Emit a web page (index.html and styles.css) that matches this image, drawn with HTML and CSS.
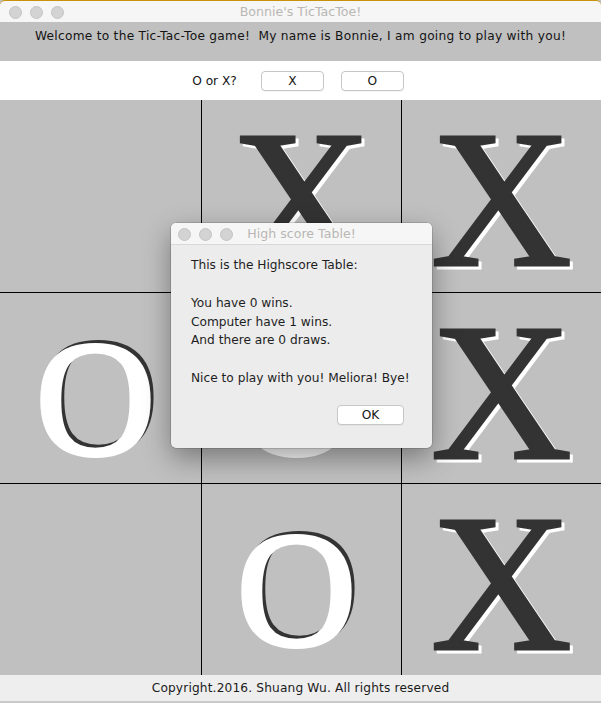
FILE: index.html
```html
<!DOCTYPE html>
<html>
<head>
<meta charset="utf-8">
<title>Bonnie's TicTacToe!</title>
<link rel="stylesheet" href="styles.css">
</head>
<body>
<div class="window">
  <div class="titlebar">
    <div class="lights"><span></span><span></span><span></span></div>
    <div class="title">Bonnie's TicTacToe!</div>
    <div></div>
  </div>
  <div class="welcome">Welcome to the Tic-Tac-Toe game!&nbsp; My name is Bonnie, I am going to play with you!</div>
  <div class="choose">
    <span class="ask">O or X?</span>
    <button class="btn first">X</button>
    <button class="btn">O</button>
  </div>
  <div class="board">
    <div class="cell"></div>
    <div class="cell"><span class="mark mark-x">X</span></div>
    <div class="cell"><span class="mark mark-x">X</span></div>
    <div class="cell"><span class="mark mark-o">O</span></div>
    <div class="cell"><span class="mark mark-o">O</span></div>
    <div class="cell"><span class="mark mark-x">X</span></div>
    <div class="cell"></div>
    <div class="cell"><span class="mark mark-o">O</span></div>
    <div class="cell"><span class="mark mark-x">X</span></div>
  </div>
  <div class="footer">Copyright.2016. Shuang Wu. All rights reserved</div>

  <div class="dialog">
    <div class="dtitlebar">
      <div class="lights small"><span></span><span></span><span></span></div>
      <div class="dtitle">High score Table!</div>
      <div></div>
    </div>
    <div class="dbody">
      <p class="line">This is the Highscore Table:</p>
      <p class="line">&nbsp;</p>
      <p class="line">You have 0 wins.</p>
      <p class="line">Computer have 1 wins.</p>
      <p class="line">And there are 0 draws.</p>
      <p class="line">&nbsp;</p>
      <p class="line">Nice to play with you! Meliora! Bye!</p>
      <div class="actions"><button class="btn ok">OK</button></div>
    </div>
  </div>
</div>
</body>
</html>
```

FILE: styles.css
```css
html, body {
  margin: 0;
  padding: 0;
  background: #c0c0c0;
}

body {
  width: 601px;
  height: 703px;
  overflow: hidden;
  font-family: "DejaVu Sans", sans-serif;
  font-size: 12.2px;
  color: #1b1b1b;
}

.window {
  position: relative;
  width: 601px;
  height: 703px;
  display: flex;
  flex-direction: column;
  background: #c0c0c0;
}

.titlebar {
  height: 21px;
  border-top: 1px solid #c8920c;
  background: #f6f6f6;
  display: grid;
  grid-template-columns: 1fr auto 1fr;
  align-items: center;
  border-radius: 5px 5px 0 0;
}

.lights {
  display: flex;
  gap: 8px;
  padding-left: 9px;
  padding-top: 2px;
}

.lights span {
  width: 11px;
  height: 11px;
  border-radius: 50%;
  background: #d3d3d3;
  border: 0.5px solid #c4c4c4;
}

.lights.small {
  padding-left: 7px;
  padding-top: 1px;
}

.title, .dtitle {
  color: #b9b6b4;
  font-size: 12.6px;
  line-height: 15px;
}

.welcome {
  height: 39px;
  box-sizing: border-box;
  padding-top: 7px;
  line-height: 15px;
  text-align: center;
  background: #c0c0c0;
  color: #141414;
  letter-spacing: 0.27px;
}

.choose {
  height: 39px;
  background: #ffffff;
  display: flex;
  justify-content: center;
  align-items: center;
  padding-right: 5px;
  box-sizing: border-box;
}

.ask {
  margin-right: 24px;
  color: #141414;
}

.btn {
  width: 63px;
  height: 20px;
  padding: 0;
  border: 1px solid #c6c6c6;
  border-radius: 4px;
  background: #ffffff;
  font-family: "DejaVu Sans", sans-serif;
  font-size: 12.2px;
  color: #141414;
  box-shadow: 0 1px 0 rgba(0, 0, 0, 0.04);
}

.btn.first {
  margin-right: 17px;
}

.board {
  height: 575px;
  display: grid;
  grid-template-columns: 201px 199px 199px;
  grid-template-rows: 192px 190px 191px;
  gap: 1px;
  background: #000000;
}

.cell {
  background: #c0c0c0;
  display: flex;
  justify-content: center;
  align-items: flex-start;
  overflow: hidden;
  font-family: "Liberation Serif", "Times New Roman", serif;
  line-height: 1;
}

.mark {
  position: relative;
  z-index: 0;
}

.mark::before {
  position: absolute;
  z-index: -1;
}

.mark-x {
  font-size: 195px;
  color: #333333;
  -webkit-text-stroke: 3px #333333;
  padding-top: 2px;
}

.mark-x::before {
  content: "X";
  left: 3px;
  top: 5px;
  color: #ffffff;
  -webkit-text-stroke: 3px #ffffff;
}

.mark-o {
  font-size: 166px;
  color: #ffffff;
  -webkit-text-stroke: 4px #ffffff;
  padding-top: 22px;
  margin-right: 10px;
}

.mark-o::before {
  content: "O";
  left: 3px;
  top: 19px;
  color: #333333;
  -webkit-text-stroke: 4px #333333;
}

.footer {
  height: 26px;
  line-height: 26px;
  border-bottom: 2px solid #c9c9c9;
  background: #eeeeee;
  text-align: center;
  color: #1b1b1b;
  letter-spacing: 0.15px;
}

.dialog {
  position: absolute;
  left: 171px;
  top: 223px;
  width: 261px;
  background: #ececec;
  border-radius: 5px;
  box-shadow: 0 10px 28px rgba(0, 0, 0, 0.38), 0 0 0 0.5px rgba(0, 0, 0, 0.25);
  overflow: hidden;
}

.dtitlebar {
  height: 21px;
  background: #f6f6f6;
  border-bottom: 1px solid #d8d8d8;
  display: grid;
  grid-template-columns: 1fr auto 1fr;
  align-items: center;
}

.dbody {
  padding: 11px 28px 23px 20px;
}

.line {
  margin: 0;
  line-height: 18.6px;
  color: #1e1e1e;
  white-space: nowrap;
}

.line:nth-child(3) {
  padding-top: 1px;
}

.actions {
  display: flex;
  justify-content: flex-end;
  margin-top: 18px;
}

.btn.ok {
  width: 67px;
  height: 20px;
}
```
